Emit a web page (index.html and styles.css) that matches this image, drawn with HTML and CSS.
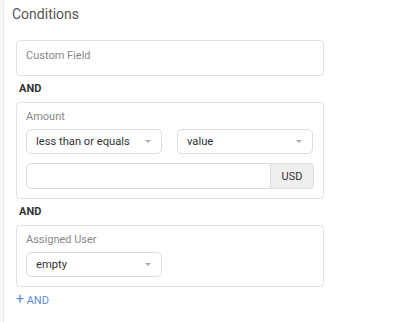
FILE: index.html
```html
<!DOCTYPE html>
<html lang="en">
<head>
  <meta charset="UTF-8" />
  <meta name="viewport" content="width=device-width, initial-scale=1.0" />
  <title>Conditions</title>
  <link rel="stylesheet" href="styles.css">
</head>
<body>
  <div class="panel">
    <div class="panel-title">Conditions</div>

    <div class="cond cond-empty">
      <div class="cond-label">Custom Field</div>
    </div>

    <div class="op">AND</div>

    <div class="cond">
      <div class="cond-label">Amount</div>
      <div class="row">
        <div class="select">less than or equals <span class="caret"></span></div>
        <div class="select">value <span class="caret"></span></div>
      </div>
      <div class="input-group">
        <div class="input"></div>
        <div class="addon">USD</div>
      </div>
    </div>

    <div class="op">AND</div>

    <div class="cond">
      <div class="cond-label">Assigned User</div>
      <div class="row">
        <div class="select">empty <span class="caret"></span></div>
      </div>
    </div>

    <a class="add-link" href="#"><span class="plus">+</span> AND</a>
  </div>
</body>
</html>
```

FILE: styles.css
```css
html, body {
  height: 100%;
}

body {
  margin: 0;
  background: #f7f7f7;
  font-family: Roboto, "Liberation Sans", sans-serif;
  color: #333;
  padding: 0 0 0 3px;
  box-sizing: border-box;
  overflow: hidden;
  display: flex;
  flex-direction: column;
}

.panel {
  flex: 1;
  background: #fff;
  border: 1px solid #e6e6e6;
  border-right: none;
  border-bottom: none;
  border-top-left-radius: 4px;
  margin-top: -1px;
  padding: 4px 96px 0 12px;
}

.panel-title {
  font-size: 14px;
  color: #555;
  margin-left: -4px;
  height: 20px;
  line-height: 20px;
  margin-bottom: 16px;
}

.cond {
  border: 1px solid #e2e2e2;
  border-radius: 4px;
  padding: 6px 9px 9px 9px;
}

.cond-empty {
  height: 36px;
  box-sizing: border-box;
  padding-top: 7px;
}

.cond-label {
  font-size: 11px;
  color: #888;
  line-height: 15px;
  margin-bottom: 5px;
}

.row {
  display: flex;
  gap: 15px;
}

.select {
  width: 136px;
  height: 25px;
  box-sizing: border-box;
  border: 1px solid #dcdcdc;
  border-radius: 5px;
  padding: 0 10px 0 9px;
  font-size: 11.2px;
  color: #333;
  display: flex;
  align-items: center;
  justify-content: space-between;
}

.caret {
  width: 0;
  height: 0;
  border-left: 3px solid transparent;
  border-right: 3px solid transparent;
  border-top: 3px solid #aaa;
}

.input-group {
  display: flex;
  margin-top: 9px;
  height: 26px;
}

.input {
  flex: 1;
  border: 1px solid #dcdcdc;
  border-radius: 5px 0 0 5px;
}

.addon {
  width: 42px;
  background: #eee;
  border: 1px solid #dcdcdc;
  border-left: none;
  border-radius: 0 5px 5px 0;
  font-size: 11px;
  color: #333;
  display: flex;
  align-items: center;
  justify-content: center;
}

.op {
  font-size: 11px;
  font-weight: bold;
  color: #333;
  line-height: 14px;
  padding: 6px 0 6px 3px;
}

.add-link {
  display: inline-block;
  margin-top: 5px;
  font-size: 11px;
  line-height: 14px;
  color: #5b8fd9;
  text-decoration: none;
}

.plus {
  font-size: 14px;
}
```
